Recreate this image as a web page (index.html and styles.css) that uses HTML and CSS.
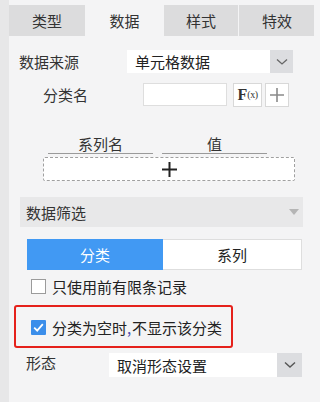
FILE: index.html
```html
<!DOCTYPE html>
<html lang="zh">
<head>
<meta charset="utf-8">
<link rel="stylesheet" href="styles.css">
</head>
<body>
<div class="app">
  <div class="strip"></div>
  <div class="panel">
    <div class="tabs">
      <div class="tab">类型</div>
      <div class="tab active">数据</div>
      <div class="tab">样式</div>
      <div class="tab">特效</div>
    </div>

    <div class="row row-source">
      <div class="label label-source">数据来源</div>
      <div class="select select-source">
        <div class="select-value">单元格数据</div>
        <div class="select-arrow"><svg width="12" height="8" viewBox="0 0 12 8"><polyline points="1,1.5 6,6 11,1.5" fill="none" stroke="#666" stroke-width="1.3"/></svg></div>
      </div>
    </div>

    <div class="row row-cat">
      <div class="label label-cat">分类名</div>
      <div class="input"></div>
      <div class="btn btn-fx"><span class="fx-f">F</span><span class="fx-x">(x)</span></div>
      <div class="btn btn-plus"><svg width="16" height="16" viewBox="0 0 16 16"><path d="M8 1v14M1 8h14" stroke="#8a8a8a" stroke-width="1.6"/></svg></div>
    </div>

    <div class="series-head">
      <div class="series-col">系列名</div>
      <div class="series-col">值</div>
    </div>
    <div class="add-box"><svg width="15" height="15" viewBox="0 0 15 15"><path d="M7.5 0v15M0 7.5h15" stroke="#222" stroke-width="2"/></svg></div>

    <div class="filter-bar">
      <span>数据筛选</span>
      <svg class="tri" width="10" height="6" viewBox="0 0 10 6"><polygon points="0,0 10,0 5,6" fill="#b5b5b5"/></svg>
    </div>

    <div class="segmented">
      <div class="seg seg-on">分类</div>
      <div class="seg">系列</div>
    </div>

    <div class="check-row">
      <span class="box"></span>
      <span class="check-text">只使用前有限条记录</span>
    </div>

    <div class="highlight">
      <span class="box box-on"><svg width="15" height="15" viewBox="0 0 15 15"><polyline points="3.2,7.6 6.2,10.6 11.8,4.2" fill="none" stroke="#fff" stroke-width="1.8"/></svg></span>
      <span class="check-text">分类为空时<span class="comma">,</span>不显示该分类</span>
    </div>

    <div class="row row-form">
      <div class="label label-form">形态</div>
      <div class="select select-form">
        <div class="select-value">取消形态设置</div>
        <div class="select-arrow arrow-form"><svg width="12" height="8" viewBox="0 0 12 8"><polyline points="1,1.5 6,6 11,1.5" fill="none" stroke="#555" stroke-width="1.4"/></svg></div>
      </div>
    </div>
  </div>
</div>
</body>
</html>
```

FILE: styles.css
```css
html, body {
  margin: 0;
  padding: 0;
  background: #f4f4f5;
}
body {
  font-family: "Noto Sans CJK SC", "Noto Sans", sans-serif;
  font-size: 15px;
  color: #333;
}
.app {
  display: flex;
  width: 314px;
  height: 402px;
  overflow: hidden;
}
.strip {
  width: 9px;
  flex: none;
  background: #e7e7e8;
}
.panel {
  flex: 1;
  display: flex;
  flex-direction: column;
  background: #f4f4f5;
}
.tabs {
  margin-top: 5px;
  height: 31px;
  display: grid;
  grid-template-columns: 76px 77px 74px 76px;
  column-gap: 1px;
}
.tab {
  background: #dcdcdd;
  display: flex;
  align-items: center;
  justify-content: center;
  line-height: 1;
}
.tab.active {
  background: #f4f4f5;
}
.row {
  display: flex;
  align-items: center;
  height: 23px;
}
.row-source {
  margin-top: 14px;
  padding-left: 10px;
}
.label-source {
  width: 108px;
}
.select {
  display: flex;
  height: 23px;
  background: #fff;
}
.select-source {
  width: 166px;
}
.select-value {
  flex: 1;
  display: flex;
  align-items: center;
  padding-left: 8px;
  line-height: 1;
  color: #222;
}
.select-arrow {
  width: 23px;
  background: #dcdde0;
  display: flex;
  align-items: center;
  justify-content: center;
}
.row-cat {
  margin-top: 10px;
  padding-left: 34px;
}
.label-cat {
  width: 100px;
}
.input {
  width: 82px;
  height: 21px;
  background: #fff;
  border: 1px solid #dedede;
}
.btn {
  height: 22px;
  background: #fff;
  border: 1px solid #d8d8d8;
  display: flex;
  align-items: center;
  justify-content: center;
}
.btn-fx {
  margin-left: 6px;
  width: 27px;
}
.btn-plus {
  margin-left: 3px;
  width: 22px;
}
.fx-f {
  font-family: "Liberation Serif", serif;
  font-weight: bold;
  font-size: 16px;
  color: #333;
}
.fx-x {
  font-family: "Liberation Serif", serif;
  font-size: 10px;
  color: #333;
  letter-spacing: -0.5px;
}
.series-head {
  margin-top: 28px;
  margin-left: 39px;
  display: flex;
  column-gap: 9px;
}
.series-col {
  width: 105px;
  height: 19px;
  line-height: 19px;
  text-align: center;
  border-bottom: 1px solid #9a9a9a;
}
.add-box {
  margin-top: 3px;
  margin-left: 34px;
  width: 250px;
  height: 22px;
  background: #fff;
  border: 1px dashed #a0a0a0;
  border-radius: 2px;
  display: flex;
  align-items: center;
  justify-content: center;
}
.filter-bar {
  margin-top: 16px;
  margin-left: 11px;
  width: 283px;
  height: 30px;
  background: #e8e8e9;
  display: flex;
  align-items: center;
  justify-content: space-between;
  padding: 0 4px 0 6px;
  box-sizing: border-box;
  line-height: 1;
}
.segmented {
  margin-top: 12px;
  margin-left: 18px;
  width: 275px;
  height: 31px;
  display: flex;
  background: #fff;
  box-sizing: border-box;
  border: 1px solid #dedede;
}
.seg {
  flex: 1;
  display: flex;
  align-items: center;
  justify-content: center;
  line-height: 1;
  color: #222;
}
.seg-on {
  flex: none;
  width: 136px;
  margin: -1px 0 -1px -1px;
  background: #4199f3;
  color: #fff;
}
.check-row {
  margin-top: 7px;
  margin-left: 22px;
  height: 18px;
  display: flex;
  align-items: center;
}
.box {
  width: 13px;
  height: 13px;
  border: 1px solid #9b9b9b;
  background: #fff;
  flex: none;
  margin-right: 6px;
  display: flex;
}
.box-on {
  width: 15px;
  height: 15px;
  border: none;
  background: #3b8eea;
  border-radius: 1px;
}
.check-text {
  line-height: 1;
  color: #222;
}
.comma {
  display: inline-block;
  width: 5px;
  color: #4a4fb0;
}
.highlight {
  margin-top: 10px;
  margin-left: 5px;
  width: 219px;
  height: 43px;
  box-sizing: border-box;
  border: 2px solid #e5211b;
  border-radius: 3px;
  display: flex;
  align-items: center;
  padding-left: 15px;
  padding-top: 1px;
}
.row-form {
  margin-top: 5px;
  padding-left: 17px;
  height: 24px;
  align-items: flex-start;
}
.label-form {
  width: 83px;
  line-height: 20px;
}
.select-form {
  width: 193px;
  height: 24px;
}
.arrow-form {
  width: 25px;
}
```
